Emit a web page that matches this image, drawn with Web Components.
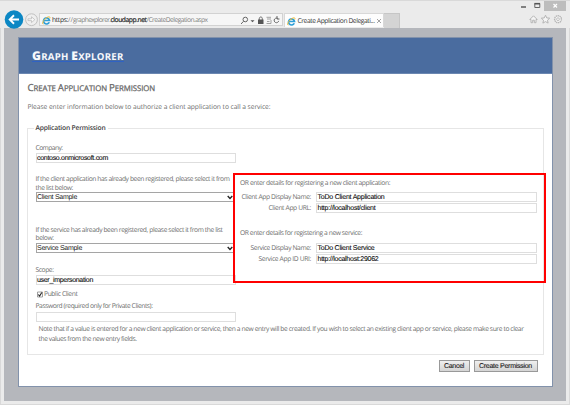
<!DOCTYPE html>
<html lang="en"><head><meta charset="utf-8"><title>Create Application Delegation</title>
<style>html,body{margin:0;height:100%;overflow:hidden;background:#ebebeb}</style></head>
<body><browser-window></browser-window>
<script>
const define=(name,html,ready)=>customElements.define(name,class extends HTMLElement{
  connectedCallback(){
    if(this.shadowRoot)return;
    this.attachShadow({mode:'open'}).innerHTML=html;
    if(ready)ready.call(this,this.shadowRoot);
  }
});

/* One line of text, tracked so that it fills the width in its "w" attribute. */
define('text-line',`<style>:host{display:block;white-space:nowrap;line-height:10px;height:10px;flex:none;text-rendering:geometricPrecision}span{display:inline-block}</style><span><slot></slot></span>`,function(root){
  const s=root.querySelector('span'),w=+this.getAttribute('w');
  this.style.width=w+'px';
  const now=s.getBoundingClientRect().width,n=this.textContent.length;
  if(now)s.style.letterSpacing=((w-now)/n)+'px';
});

define('ie-icon',`<style>:host{display:block;width:9px;height:9px;flex:none}svg{display:block}</style>
<svg width="9" height="9" viewBox="0 0 18 18"><path d="M14.500 12.500A6 6 0 1 1 15 9H4.500" fill="none" stroke="#2f9fd8" stroke-width="3.400"/><path d="M2.500 16.500C-1 15 4 6 10 3c4-2.500 7-2 5.500 2" fill="none" stroke="#f0bd3c" stroke-width="2"/></svg>`);

define('browser-bar',`<style>
:host{display:flex;height:28px;box-sizing:border-box;padding-left:4px;background:#ebebeb;font:6.700px "Open Sans","Noto Sans",sans-serif;color:#333;flex:none}
.back{display:block;flex:none;margin:9px 0 0;width:34px;height:20px}
.url{display:flex;align-items:center;box-sizing:border-box;width:244px;height:13px;margin:13px 0 0 1px;border:1px solid #d2d2d2;background:#f6f6f6;padding:1px 0 0 2px;flex:none}
.url text-line{color:#808080}.url .k{color:#222}
.tools{margin-left:33px;flex:none}
.tab{display:flex;align-items:center;box-sizing:border-box;width:100px;height:14px;margin:13px 0 0 1px;background:#fdfdfd;border:1px solid #d8d8d8;border-bottom:0;padding:1px 0 0 2px;flex:none}
.new{width:16px;height:15px;margin-top:13px;background:#d4d4d4;box-shadow:inset 0 1px #c6c6c6,inset -1px 0 #c6c6c6;flex:none}
.right{display:block;margin-left:116px;width:52px;height:28px;flex:none}
</style>
<svg class="back" viewBox="4 9 34 20"><circle cx="14" cy="19.500" r="9.300" fill="#0c87c4"/><path d="M19 19.500H10M14 15.300l-4.300 4.200 4.300 4.200" fill="none" stroke="#fff" stroke-width="1.900"/><circle cx="31.500" cy="19.700" r="5.900" fill="#efefef" stroke="#c0c0c0" stroke-width="1"/><path d="M28 18.800h3.500v-2l3.300 2.900-3.300 2.900v-2H28z" fill="#f8f8f8" stroke="#bcbcbc" stroke-width=".8"/></svg>
<div class="url"><ie-icon></ie-icon><text-line class="k" w="16" style="margin-left:1px">https:</text-line><text-line w="5">//</text-line><text-line w="37.500">graphexplorer.</text-line><text-line class="k" w="36" style="-webkit-text-stroke:.2px #222">cloudapp.net</text-line><text-line w="61">/CreateDelegation.aspx</text-line>
<svg class="tools" width="40" height="9" viewBox="241 15 40 9" fill="none" stroke="#666"><circle cx="245.300" cy="18.500" r="2.300"/><path d="M243.500 20.300l-2.500 2.700"/><path d="M250.500 19.300h4l-2 2z" fill="#555" stroke="none"/><path d="M258 18.500h5.500v4.500H258z" fill="#555" stroke="none"/><path d="M259.300 19v-1.500c0-2 3-2 3 0V19"/><path d="M266.500 16.300h4.500M267 18h4M266.500 22.500h4.500V19M267 20.500h2.500" stroke="#999" stroke-width=".9"/><path d="M278.200 17.900a2.300 2.300 0 1 0 .5 2M277 15v3h2.500"/></svg></div>
<div class="tab"><ie-icon></ie-icon><text-line w="77" style="margin-left:1.500px">Create Application Delegati...</text-line>
<svg width="6" height="6" viewBox="0 0 6 6" style="margin-left:1.500px"><path d="M1 1l4 4M5 1L1 5" stroke="#999" stroke-width=".9"/></svg></div><div class="new"></div>
<svg class="right" viewBox="516 0 52 28" fill="none"><path d="M521 7h5" stroke="#666" stroke-width="1.600"/><path d="M534.800 3.500h5v4h-5z" stroke="#666"/><path d="M534.500 3.700h5.500" stroke="#555" stroke-width="1.600"/><path d="M544 1h22v10h-22z" fill="#bdbdbd"/><path d="M553.500 4l3.500 3.500M557 4l-3.500 3.500" stroke="#fff" stroke-width="1.200"/>
<g stroke="#b5b5b5" fill="#f5f5f5"><path d="M529.800 19.500l3.700-3.700 3.700 3.700h-1.200v3.200h-1.700v-2.500h-1.600v2.500H531v-3.200z"/><path d="M545.500 15.200l1.200 2.700 3 .3-2.200 2 .6 2.900-2.600-1.500-2.600 1.500.6-2.900-2.200-2 3-.3z"/><circle cx="558" cy="19.200" r="3.400" stroke-dasharray="1.400 .5" stroke-width="1.400"/><circle cx="558" cy="19.200" r="1.400" stroke-width=".8"/></g></svg>`);

define('text-field',`<style>:host{display:flex;align-items:center;box-sizing:border-box;width:200px;height:10px;border:1px solid #dedede;background:#fff;padding:2px 0 0 .5px;font:7px "Liberation Sans",Arial,sans-serif;color:#111;-webkit-text-stroke:.12px #111;flex:none}</style><slot></slot>`);

define('select-field',`<style>:host{display:flex;align-items:center;justify-content:space-between;box-sizing:border-box;width:199px;height:10px;border:1px solid #a5a5a5;background:#fff;padding:1px 1px 0 .5px;font:7px "Liberation Sans",Arial,sans-serif;color:#222;flex:none}</style><slot></slot><svg width="6" height="5" viewBox="0 0 6 5"><path d="M.7 1l2.300 2.500L5.300 1" fill="none" stroke="#222" stroke-width="1.300"/></svg>`);

define('push-button',`<style>:host{display:flex;align-items:center;justify-content:center;box-sizing:border-box;height:12px;border:1px solid #999;background:linear-gradient(#efefef,#d4d4d4);padding-top:1px;font:7px "Liberation Sans",Arial,sans-serif;color:#222;-webkit-text-stroke:.12px #222;flex:none}</style><slot></slot>`);

define('detail-row',`<style>:host{display:flex;justify-content:flex-end;align-items:center;gap:5px;height:10px;width:297px}</style><slot></slot>`);

define('permission-form',`<style>
:host{display:block;position:relative;box-sizing:border-box;width:517px;height:227px;border:1px solid #e6e6e6;font:6.700px "Open Sans","Noto Sans",sans-serif;color:#6c6c6c}
.legend{display:block;width:70px;background:#fff;padding:0 2px;margin:-6px 0 0 6px;color:#3c3c3c;font-weight:600}
.cols{display:flex;gap:4.500px;margin:9px 0 0 8px}
.left{width:200px}.left>*{display:flex}
.right{padding-top:36px}
detail-row text-field{width:221px}
.check{align-items:center;margin-top:4px;height:10px;gap:2px}
.note{margin:2px 0 0 11px}
.mark{position:absolute;left:205px;top:44px;width:313px;height:110px;border:2px solid #f00;box-sizing:border-box}
</style>
<text-line class="legend" w="70">Application Permission</text-line>
<div class="cols"><div class="left">
<text-line w="27" style="margin-top:1px">Company:</text-line>
<text-field><text-line w="71">contoso.onmicrosoft.com</text-line></text-field>
<text-line w="194" style="margin-top:11px">If the client application has already been registered, please select it from</text-line>
<text-line w="37.500" style="margin-top:-1px">the list below:</text-line>
<select-field style="margin-top:-1px"><text-line w="40">Client Sample</text-line></select-field>
<text-line w="187" style="margin-top:23px">If the service has already been registered, please select it from the list</text-line>
<text-line w="18" style="margin-top:-2px">below:</text-line>
<select-field><text-line w="45">Service Sample</text-line></select-field>
<text-line w="18" style="margin-top:12px">Scope:</text-line>
<text-field><text-line w="56">user_impersonation</text-line></text-field>
<div class="check"><svg width="6" height="7" viewBox="0 0 6 7" style="margin-left:1px"><path d="M.5 1h5v5h-5z" fill="#fff" stroke="#888" stroke-width=".8"/><path d="M1.300 3.500l1.300 1.500 2.200-3.500" fill="none" stroke="#222" stroke-width="1.100"/></svg><text-line w="33.500" style="margin-left:-.5px">Public Client</text-line></div>
<text-line w="117" style="margin-top:2px">Password (required only for Private Clients):</text-line>
<text-field style="margin-top:1px"></text-field>
</div><div class="right">
<text-line w="150">OR enter details for registering a new client application:</text-line>
<detail-row style="margin-top:4px"><text-line w="69.500">Client App Display Name:</text-line><text-field><text-line w="67">ToDo Client Application</text-line></text-field></detail-row>
<detail-row style="margin-top:1px"><text-line w="42.500">Client App URL:</text-line><text-field><text-line w="58">http://localhost/client</text-line></text-field></detail-row>
<text-line w="122" style="margin-top:15px">OR enter details for registering a new service:</text-line>
<detail-row style="margin-top:5px"><text-line w="60.500">Service Display Name:</text-line><text-field><text-line w="57">ToDo Client Service</text-line></text-field></detail-row>
<detail-row style="margin-top:1px"><text-line w="52.500">Service App ID URI:</text-line><text-field><text-line w="61">http://localhost:29062</text-line></text-field></detail-row>
</div></div>
<div class="note"><text-line w="485">Note that if a value is entered for a new client application or service, then a new entry will be created. If you wish to select an existing client app or service, please make sure to clear</text-line><text-line w="98">the values from the new entry fields.</text-line></div>
<div class="mark"></div>`);

define('explorer-page',`<style>
:host{display:block;box-sizing:border-box;width:535px;height:350px;background:#fff;border:1px solid #8292ab;font:6.700px "Open Sans","Noto Sans",sans-serif;color:#6c6c6c}
header{height:36px;box-sizing:border-box;background:#4a6c9f;border-bottom:1px solid #6b87b1;padding:12px 0 0 13.500px;margin-bottom:9px}
header text-line{font-size:9.600px;font-weight:700;color:#f7f9fc;height:11px;line-height:13px;border-bottom:1px solid #2f62c4;text-transform:uppercase}
header b{font-size:12px;line-height:0}
h1{margin:0 0 0 9px;font-size:7.800px;font-weight:400;color:#666;text-transform:uppercase;-webkit-text-stroke:.25px #666}
h1 text-line{line-height:12px}
h1 b{font-size:9.700px;font-weight:400;line-height:0}
.intro{margin:9px 0 0 9px}
permission-form{margin:16px 0 0 8px}
footer{display:flex;gap:4px;justify-content:flex-end;margin:5px 14px 0 0}
</style>
<header><text-line w="91.500"><b>G</b>raph <b>E</b>xplorer</text-line></header>
<h1><text-line w="127.500"><b>C</b>reate <b>A</b>pplication <b>P</b>ermission</text-line></h1>
<text-line class="intro" w="243">Please enter information below to authorize a client application to call a service:</text-line>
<permission-form></permission-form>
<footer><push-button style="width:31px"><text-line w="20">Cancel</text-line></push-button><push-button style="width:64px"><text-line w="53">Create Permission</text-line></push-button></footer>`);

define('browser-window',`<style>
:host{display:block;box-sizing:border-box;width:570px;height:405px;background:#ebebeb;box-shadow:inset 0 0 0 1px #d9d9d9}
main{box-sizing:border-box;width:562px;height:373px;margin-left:4px;background:#b5b7bc;padding:9px 0 0 13.500px}
browser-bar{box-shadow:inset 0 1px #d9d9d9}
</style><browser-bar></browser-bar><main><explorer-page></explorer-page></main>`);
</script></body></html>
